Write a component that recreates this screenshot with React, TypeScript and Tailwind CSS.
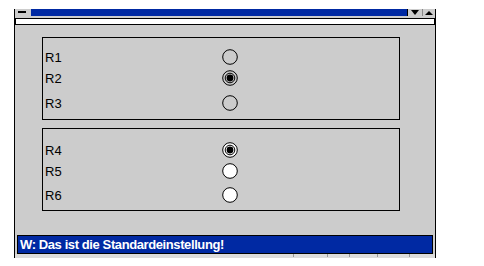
import React from "react";

function Radio({ checked, fill }: { checked?: boolean; fill: string }) {
  return (
    <svg width="16" height="16" viewBox="0 0 16 16" className="block">
      <circle cx="8" cy="8" r="7.3" fill={fill} stroke="#000" strokeWidth="1" />
      {checked && <circle cx="8" cy="8" r="4.8" fill="none" stroke="#000" strokeWidth="1" />}
      {checked && <circle cx="8" cy="8" r="3.4" fill="#000" />}
    </svg>
  );
}

function Row({ label, checked, fill, h, mt }: { label: string; checked?: boolean; fill: string; h: string; mt: string }) {
  return (
    <div className={`flex items-center ${h} ${mt}`}>
      <div className="w-[179px] pl-[2px] text-[13px] leading-none text-black">{label}</div>
      <Radio checked={checked} fill={fill} />
    </div>
  );
}

export default function App() {
  return (
    <div className="w-[484px] h-[266px] bg-white pt-[9px] pl-[14px]" style={{ fontFamily: '"Liberation Sans", Arial, sans-serif' }}>
      <div className="w-[422px] h-[249px] bg-[#cccccc] border-l border-r border-black flex flex-col">
        {/* title bar */}
        <div className="flex h-[7px]">
          <div className="w-[16px] bg-[#cccccc] flex items-start pt-[2px] pl-[3px]">
            <div className="w-[8px] h-[2px] bg-black" />
          </div>
          <div className="flex-1 bg-[#0029a3] border-r border-black" />
          <div className="w-[14px] bg-[#cccccc] flex justify-center pt-[1px]">
            <svg width="8" height="5" viewBox="0 0 8 5"><polygon points="0,0 8,0 4,5" fill="#000" /></svg>
          </div>
          <div className="w-[1px] bg-[#888]" />
          <div className="flex-1 max-w-[12px] bg-[#cccccc] flex justify-center pt-[2px]">
            <svg width="8" height="4" viewBox="0 0 8 4"><polygon points="0,4 8,4 4,0" fill="#000" /></svg>
          </div>
        </div>
        {/* text field */}
        <div className="mt-[2px] h-[7px] bg-white border border-black" />
        {/* body */}
        <div className="pl-[27px] pt-[12px]">
          <div className="w-[358px] h-[83px] border border-black pt-[9px]">
            <Row label="R1" fill="#cccccc" h="h-[20px]" mt="mt-0" />
            <Row label="R2" checked fill="#cccccc" h="h-[22px]" mt="mt-0" />
            <Row label="R3" fill="#cccccc" h="h-[22px]" mt="mt-[3px]" />
          </div>
          <div className="w-[358px] h-[83px] border border-black mt-[8px] pt-[11px]">
            <Row label="R4" checked fill="#ffffff" h="h-[20px]" mt="mt-0" />
            <Row label="R5" fill="#ffffff" h="h-[22px]" mt="mt-0" />
            <Row label="R6" fill="#ffffff" h="h-[22px]" mt="mt-[2px]" />
          </div>
        </div>
        {/* status bar */}
        <div className="mx-[2px] mt-[24px] h-[19px] bg-[#0029a3] border border-black flex items-center pl-[2px]">
          <span className="text-white font-bold text-[13px] leading-none tracking-[-0.4px]">W: Das ist die Standardeinstellung!</span>
        </div>
        <div className="flex-1 bg-[#dcdcdc] relative">
          <div className="absolute left-[278px] top-0 w-px h-[3px] bg-[#999]" />
          <div className="absolute left-[312px] top-0 w-px h-[3px] bg-[#999]" />
          <div className="absolute left-[334px] top-0 w-px h-[3px] bg-[#999]" />
          <div className="absolute left-[362px] top-0 w-px h-[3px] bg-[#999]" />
          <div className="absolute left-[394px] top-0 w-px h-[3px] bg-[#999]" />
        </div>
      </div>
    </div>
  );
}
